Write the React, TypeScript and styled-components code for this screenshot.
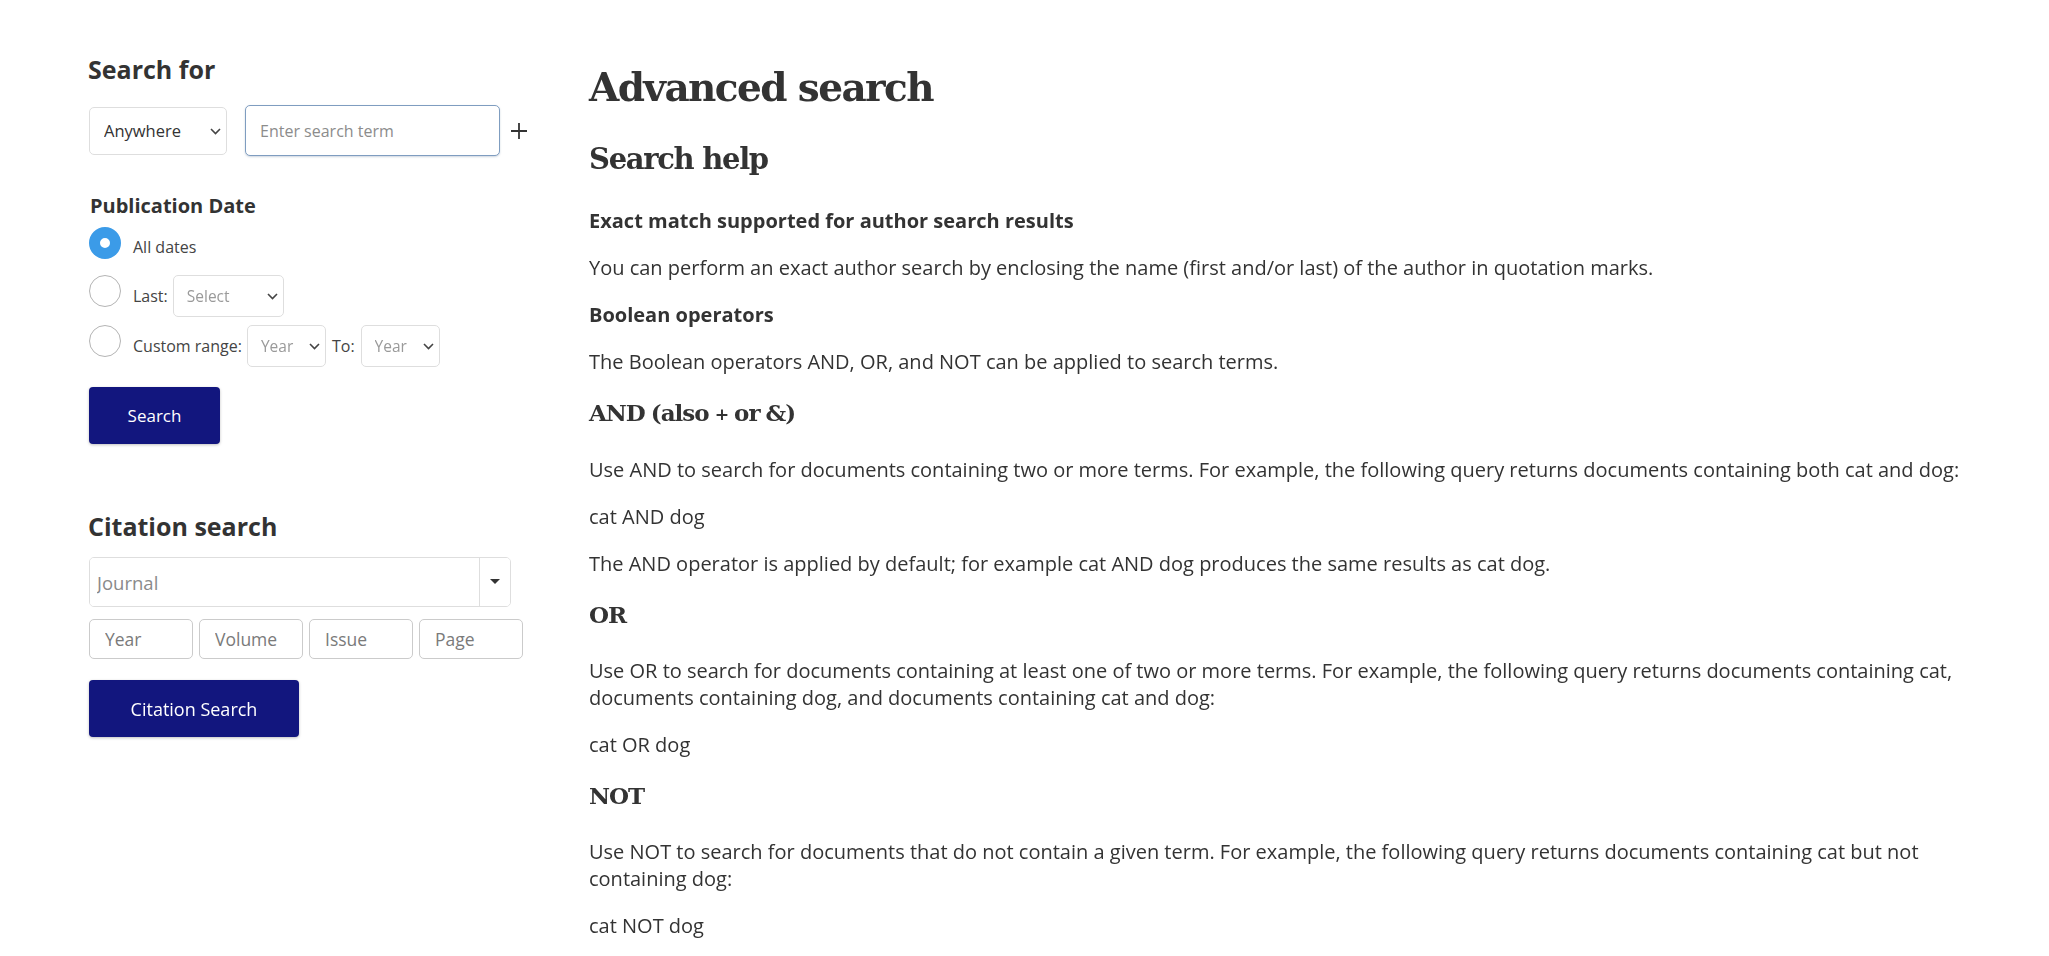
import styled, { createGlobalStyle } from "styled-components";

const GlobalStyle = createGlobalStyle`
  html, body {
    margin: 0;
    padding: 0;
    background: #fff;
  }
  body {
    font-family: "Open Sans", "Liberation Sans", sans-serif;
    color: #333;
  }
`;

const Page = styled.div`
  display: flex;
  align-items: flex-start;
`;

const Sidebar = styled.aside`
  width: 589px;
  flex-shrink: 0;
  box-sizing: border-box;
  padding: 53px 0 0 88px;
`;

const Main = styled.main`
  flex: 1;
  min-width: 0;
  padding: 63px 59px 0 0;
`;

const SideHeading = styled.h2<{ $gap?: number }>`
  margin: ${(p) => p.$gap ?? 0}px 0 0;
  font: 700 25px/33px "Open Sans", sans-serif;
  color: #333;
`;

const SubHeading = styled.h3`
  margin: 36px 0 0 2px;
  font: 700 20px/28px "Open Sans", sans-serif;
  color: #333;
`;

const SearchRow = styled.div`
  display: flex;
  align-items: center;
  margin: 19px 0 0 1px;
`;

const SelectWrap = styled.div<{ $w: number; $h: number }>`
  position: relative;
  width: ${(p) => p.$w}px;
  height: ${(p) => p.$h}px;
  flex-shrink: 0;
`;

const NativeSelect = styled.select<{ $muted?: boolean; $size?: number; $pad?: number }>`
  appearance: none;
  width: 100%;
  height: 100%;
  box-sizing: border-box;
  border: 1px solid #dedede;
  border-radius: 5px;
  background: #fff;
  padding: 0 0 0 ${(p) => p.$pad ?? 14}px;
  font-family: "Open Sans", sans-serif;
  font-size: ${(p) => p.$size ?? 15}px;
  color: ${(p) => (p.$muted ? "#9a9a9a" : "#333")};
  outline: none;
`;

const Chevron = styled.svg`
  position: absolute;
  top: 50%;
  right: 6px;
  width: 11px;
  height: 7px;
  margin-top: -3px;
  pointer-events: none;
`;

const TermInput = styled.input`
  width: 255px;
  height: 51px;
  box-sizing: border-box;
  margin-left: 18px;
  border: 1px solid #7f9dc0;
  border-radius: 5px;
  box-shadow: 0 1px 2px rgba(60, 90, 130, 0.25);
  padding: 0 0 0 14px;
  font: 16px "Open Sans", sans-serif;
  color: #333;
  caret-color: #000;
  outline: none;

  &::placeholder {
    color: #8c8c8c;
  }
`;

const AddButton = styled.button`
  margin-left: 11px;
  padding: 0;
  border: 0;
  background: none;
  width: 16px;
  height: 16px;
  display: flex;
  cursor: pointer;
`;

const RadioList = styled.div`
  margin: 7px 0 0 1px;
  display: flex;
  flex-direction: column;
  gap: 8px;
`;

const RadioRow = styled.label`
  display: flex;
  align-items: flex-start;
  cursor: pointer;
`;

const RadioDot = styled.span<{ $checked?: boolean }>`
  width: 32px;
  height: 32px;
  box-sizing: border-box;
  border-radius: 50%;
  flex-shrink: 0;
  background: #fff;
  border: ${(p) => (p.$checked ? "11px solid #3b9be8" : "1px solid #b4b4b4")};
`;

const RadioBody = styled.span`
  display: flex;
  align-items: center;
  min-height: 40px;
  margin-left: 12px;
  gap: 5px;
  font-size: 16px;
  color: #444;
`;

const ToLabel = styled.span`
  margin: 0 1px;
`;

const PrimaryButton = styled.button<{ $w: number; $gap: number; $size: number }>`
  display: block;
  width: ${(p) => p.$w}px;
  height: 57px;
  margin: ${(p) => p.$gap}px 0 0 1px;
  border: 0;
  border-radius: 4px;
  background: #12167e;
  box-shadow: 0 1px 3px rgba(0, 0, 0, 0.25);
  color: #fff;
  font-family: "Open Sans", sans-serif;
  font-size: ${(p) => p.$size}px;
  cursor: pointer;
`;

const JournalBox = styled.div`
  display: flex;
  width: 422px;
  height: 50px;
  box-sizing: border-box;
  margin: 14px 0 0 1px;
  border: 1px solid #dedede;
  border-radius: 5px;
  overflow: hidden;
`;

const JournalInput = styled.input`
  flex: 1;
  min-width: 0;
  border: 0;
  padding: 0 0 0 7px;
  font: 18.5px "Open Sans", sans-serif;
  color: #333;
  outline: none;

  &::placeholder {
    color: #8a8a8a;
  }
`;

const CaretButton = styled.button`
  width: 31px;
  border: 0;
  border-left: 1px solid #dedede;
  background: #fff;
  display: flex;
  align-items: center;
  justify-content: center;
  padding: 0;
  cursor: pointer;

  &::after {
    content: "";
    border-left: 5px solid transparent;
    border-right: 5px solid transparent;
    border-top: 5px solid #333;
    margin-top: -2px;
  }
`;

const CitationGrid = styled.div`
  display: grid;
  grid-template-columns: repeat(4, 104px);
  gap: 6px;
  margin: 12px 0 0 1px;
`;

const SmallInput = styled.input`
  height: 40px;
  box-sizing: border-box;
  border: 1px solid #cbcbcb;
  border-radius: 5px;
  padding: 0 0 0 15px;
  font: 17.5px "Open Sans", sans-serif;
  color: #333;
  outline: none;

  &::placeholder {
    color: #7a7a7a;
  }
`;

const Title = styled.h1`
  margin: 0;
  font: 700 39px/48px "DejaVu Serif", "Liberation Serif", serif;
  letter-spacing: -1.6px;
  color: #333;
`;

const HelpTitle = styled.h2`
  margin: 30px 0 30px;
  font: 700 29px/36px "DejaVu Serif", "Liberation Serif", serif;
  letter-spacing: -1.3px;
  color: #333;
`;

const OpHeading = styled.h3`
  margin: 23px 0 27px;
  font: 700 23px/30px "DejaVu Serif", "Liberation Serif", serif;
  letter-spacing: -1px;
  word-spacing: -1px;
  color: #333;
`;

const Small = styled.span`
  font-size: 0.75em;
  vertical-align: 1px;
`;

const Para = styled.p<{ $bold?: boolean }>`
  margin: 0 0 20px;
  font-size: 20px;
  line-height: 27px;
  font-weight: ${(p) => (p.$bold ? 700 : 400)};
  color: #333;

  &:last-child {
    margin-bottom: 0;
  }
`;

const ChevronIcon = () => (
  <Chevron viewBox="0 0 11 7">
    <path d="M1 1l4.5 4.5L10 1" fill="none" stroke="#444" strokeWidth="1.6" />
  </Chevron>
);

const Dropdown = ({
  w,
  h,
  label,
  muted,
  size,
  pad,
}: {
  w: number;
  h: number;
  label: string;
  muted?: boolean;
  size?: number;
  pad?: number;
}) => (
  <SelectWrap $w={w} $h={h}>
    <NativeSelect $muted={muted} $size={size} $pad={pad} defaultValue={label}>
      <option>{label}</option>
    </NativeSelect>
    <ChevronIcon />
  </SelectWrap>
);

export default function App() {
  return (
    <>
      <GlobalStyle />
      <Page>
        <Sidebar>
          <SideHeading>Search for</SideHeading>
          <SearchRow>
            <Dropdown w={138} h={48} label="Anywhere" size={16.5} pad={14} />
            <TermInput placeholder="Enter search term" autoFocus />
            <AddButton aria-label="Add term">
              <svg width="16" height="16" viewBox="0 0 16 16">
                <path d="M8 0v16M0 8h16" stroke="#333" strokeWidth="1.8" />
              </svg>
            </AddButton>
          </SearchRow>

          <SubHeading>Publication Date</SubHeading>
          <RadioList>
            <RadioRow>
              <RadioDot $checked />
              <RadioBody>All dates</RadioBody>
            </RadioRow>
            <RadioRow>
              <RadioDot />
              <RadioBody>
                Last:
                <Dropdown w={111} h={42} label="Select" muted size={15.5} pad={13} />
              </RadioBody>
            </RadioRow>
            <RadioRow>
              <RadioDot />
              <RadioBody>
                Custom range:
                <Dropdown w={79} h={42} label="Year" muted size={15.5} pad={13} />
                <ToLabel>To:</ToLabel>
                <Dropdown w={79} h={42} label="Year" muted size={15.5} pad={13} />
              </RadioBody>
            </RadioRow>
          </RadioList>
          <PrimaryButton $w={131} $gap={20} $size={17}>
            Search
          </PrimaryButton>

          <SideHeading $gap={66}>Citation search</SideHeading>
          <JournalBox>
            <JournalInput placeholder="Journal" />
            <CaretButton aria-label="Choose journal" />
          </JournalBox>
          <CitationGrid>
            <SmallInput placeholder="Year" />
            <SmallInput placeholder="Volume" />
            <SmallInput placeholder="Issue" />
            <SmallInput placeholder="Page" />
          </CitationGrid>
          <PrimaryButton $w={210} $gap={21} $size={18}>
            Citation Search
          </PrimaryButton>
        </Sidebar>

        <Main>
          <Title>Advanced search</Title>
          <HelpTitle>Search help</HelpTitle>
          <Para $bold>Exact match supported for author search results</Para>
          <Para>
            You can perform an exact author search by enclosing the name (first and/or last) of the
            author in quotation marks.
          </Para>
          <Para $bold>Boolean operators</Para>
          <Para>The Boolean operators AND, OR, and NOT can be applied to search terms.</Para>

          <OpHeading>
            AND (also <Small>+</Small> or &amp;)
          </OpHeading>
          <Para>
            Use AND to search for documents containing two or more terms. For example, the following
            query returns documents containing both cat and dog:
          </Para>
          <Para>cat AND dog</Para>
          <Para>
            The AND operator is applied by default; for example cat AND dog produces the same results as
            cat dog.
          </Para>

          <OpHeading>OR</OpHeading>
          <Para>
            Use OR to search for documents containing at least one of two or more terms. For example,
            the following query returns documents containing cat, documents containing dog, and
            documents containing cat and dog:
          </Para>
          <Para>cat OR dog</Para>

          <OpHeading>NOT</OpHeading>
          <Para>
            Use NOT to search for documents that do not contain a given term. For example, the following
            query returns documents containing cat but not containing dog:
          </Para>
          <Para>cat NOT dog</Para>
        </Main>
      </Page>
    </>
  );
}
